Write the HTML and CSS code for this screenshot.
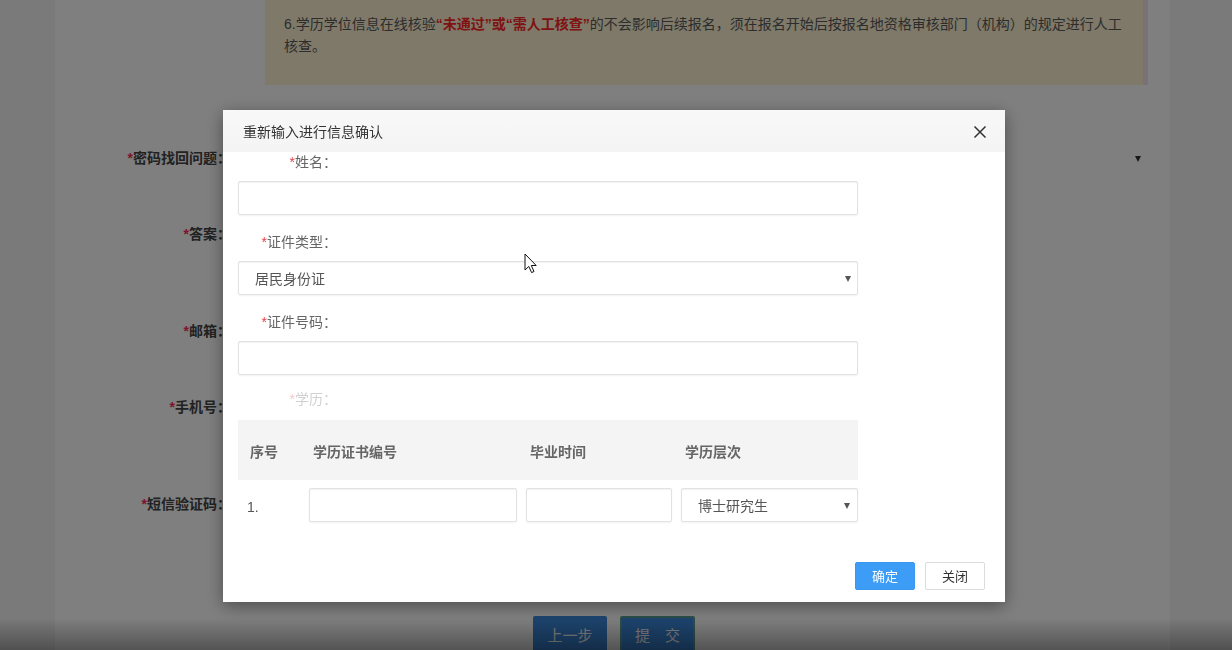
FILE: index.html
```html
<!DOCTYPE html>
<html lang="zh-CN">
<head>
<meta charset="utf-8">
<title>重新输入进行信息确认</title>
<link rel="stylesheet" href="styles.css">
</head>
<body>
<div class="page">
  <div class="notice">6.学历学位信息在线核验<b class="hl">“未通过”或“需人工核查”</b>的不会影响后续报名，须在报名开始后按报名地资格审核部门（机构）的规定进行人工<br>核查。</div>
  <div class="bg-form">
    <div class="bg-row short"><label class="bg-label"><i>*</i>密码找回问题：</label><div class="bg-field"><span class="caret dark"></span></div></div>
    <div class="bg-row tall"><label class="bg-label"><i>*</i>答案：</label></div>
    <div class="bg-row short"><label class="bg-label"><i>*</i>邮箱：</label></div>
    <div class="bg-row tall"><label class="bg-label"><i>*</i>手机号：</label></div>
    <div class="bg-row last"><label class="bg-label"><i>*</i>短信验证码：</label></div>
  </div>
  <div class="actions">
    <button class="btn-blue">上一步</button>
    <button class="btn-blue submit">提　交</button>
  </div>
</div>

<div class="mask"></div>

<div class="modal">
  <div class="modal-head">
    <span class="modal-title">重新输入进行信息确认</span>
    <span class="close"><svg width="14" height="14" viewBox="0 0 14 14"><path d="M1.5 1.5 L12.5 12.5 M12.5 1.5 L1.5 12.5" stroke="#333" stroke-width="1.5" fill="none"/></svg></span>
  </div>
  <div class="modal-body">
    <div class="group">
      <label class="lbl"><i>*</i>姓名：</label>
      <input class="input" type="text">
    </div>
    <div class="group">
      <label class="lbl"><i>*</i>证件类型：</label>
      <div class="input select"><span>居民身份证</span><span class="caret"></span></div>
    </div>
    <div class="group">
      <label class="lbl"><i>*</i>证件号码：</label>
      <input class="input" type="text">
    </div>
    <label class="lbl faint"><i>*</i>学历：</label>
    <div class="edu-table">
      <div class="th">序号</div>
      <div class="th">学历证书编号</div>
      <div class="th">毕业时间</div>
      <div class="th">学历层次</div>
      <div class="td idx">1.</div>
      <div class="td"><input class="input" type="text"></div>
      <div class="td"><input class="input" type="text"></div>
      <div class="td lastcol"><div class="input select"><span>博士研究生</span><span class="caret"></span></div></div>
    </div>
    <div class="modal-foot">
      <button class="btn btn-primary">确定</button>
      <button class="btn btn-default">关闭</button>
    </div>
  </div>
</div>

<div class="cursor"><svg width="14" height="22" viewBox="0 0 14 22"><path d="M1 1 L1 17 L4.8 13.4 L7.6 19.6 L10 18.5 L7.3 12.5 L12.2 12.5 Z" fill="#fff" stroke="#111" stroke-width="1" stroke-linejoin="round"/></svg></div>
</body>
</html>
```

FILE: styles.css
```css
* { box-sizing: border-box; }

html, body {
  margin: 0;
  height: 650px;
  overflow: hidden;
}

body {
  background: #f4f4f4;
  font-family: "Liberation Sans", "Noto Sans CJK SC", sans-serif;
  font-size: 14px;
  color: #333;
}

/* ---------- page behind the mask ---------- */
.page {
  margin-left: 55px;
  width: 1115px;
  height: 650px;
  overflow: hidden;
  background: #fff;
}

.notice {
  margin-left: 210px;
  width: 883px;
  height: 85px;
  padding: 13px 0 0 19px;
  background: #fdf3d2;
  border-right: 5px solid #f4e2ee;
  line-height: 22px;
  color: #5a5a5a;
  white-space: nowrap;
}

.notice .hl {
  color: #ff2424;
  font-weight: bold;
}

.bg-form {
  margin-top: 63px;
}

.bg-row {
  display: flex;
  align-items: flex-start;
}
.bg-row.short { height: 76px; }
.bg-row.tall { height: 97px; }
.bg-row.last { height: 122px; }

.bg-label {
  width: 176px;
  text-align: right;
  line-height: 20px;
  font-weight: bold;
  color: #444;
}
.bg-label i {
  font-style: normal;
  color: #ff2a55;
}

.bg-field {
  width: 910px;
  height: 20px;
  display: flex;
  justify-content: flex-end;
  align-items: center;
}

.actions {
  display: flex;
  justify-content: center;
  gap: 13px;
  padding-left: 3px;
}

.btn-blue {
  width: 74px;
  height: 40px;
  border: 0;
  border-radius: 2px;
  background: #3b88dc;
  color: #fff;
  font-family: inherit;
  font-size: 15px;
  padding: 0 0 4px;
}
.btn-blue.submit {
  width: 75px;
  border: 2px solid #55a090;
}

/* ---------- mask ---------- */
.mask {
  position: fixed;
  inset: 0;
  background: linear-gradient(to bottom, rgba(0,0,0,.5) 0, rgba(0,0,0,.5) 618px, rgba(0,0,0,.67) 650px);
}

/* ---------- modal ---------- */
.modal {
  position: fixed;
  left: 223px;
  top: 110px;
  width: 782px;
  background: #fff;
  box-shadow: 0 4px 16px rgba(0,0,0,.4);
  font-family: "Noto Sans CJK SC", sans-serif;
}

.modal-head {
  height: 42px;
  padding: 0 18px 0 20px;
  display: flex;
  align-items: center;
  justify-content: space-between;
  background: linear-gradient(#f8f8f9, #f4f4f5);
}

.modal-title {
  font-size: 14px;
  color: #333;
  line-height: 20px;
}

.close {
  display: flex;
  width: 14px;
  height: 14px;
  margin-top: 1px;
}

.modal-body {
  padding: 0 15px 12px;
}

.group {
  width: 620px;
  margin-bottom: 17px;
}

.lbl {
  display: block;
  width: 99px;
  height: 20px;
  margin-bottom: 9px;
  text-align: right;
  line-height: 20px;
  font-size: 14px;
  color: #666;
  font-family: "Liberation Sans", "Noto Sans CJK SC", sans-serif;
}
.lbl i {
  font-style: normal;
  color: #e2434a;
}

.lbl.faint {
  margin-top: -3px;
  margin-bottom: 11px;
  opacity: .3;
}

.input {
  display: block;
  width: 100%;
  height: 34px;
  margin: 0;
  padding: 0 16px;
  border: 1px solid #e2e2e4;
  border-radius: 2px;
  background: #fff;
  box-shadow: inset 0 1px 1px rgba(0,0,0,.05), 0 1px 2px rgba(0,0,0,.05);
  font-family: "Noto Sans CJK SC", sans-serif;
  font-size: 14px;
  color: #555;
}

.select {
  display: flex;
  align-items: center;
  justify-content: space-between;
  padding: 0 6px 0 16px;
  line-height: 20px;
}

.caret {
  width: 0;
  height: 0;
  border-left: 3.5px solid transparent;
  border-right: 3.5px solid transparent;
  border-top: 6px solid #555;
  margin-top: 1px;
}
.caret.dark {
  border-top-color: #333;
}

/* ---------- education table ---------- */
.edu-table {
  width: 620px;
  display: grid;
  grid-template-columns: 67px 217px 155px 181px;
  grid-template-rows: 60px 50px;
}

.th {
  background: #f4f4f5;
  padding: 2px 0 0 8px;
  display: flex;
  align-items: center;
  font-size: 14px;
  font-weight: bold;
  color: #666;
}
.th:first-child { padding-left: 12px; }

.td {
  display: flex;
  align-items: center;
  padding: 0 5px 0 4px;
}
.td.idx {
  padding: 4px 0 0 9px;
  font-size: 14px;
  color: #555;
  font-family: "Liberation Sans", sans-serif;
}
.td.lastcol { padding-right: 0; }
.td .input { padding: 0 10px; }
.td .select { padding: 0 7px 0 16px; }

.modal-foot {
  margin-top: 32px;
  display: flex;
  justify-content: flex-end;
  gap: 10px;
  padding-right: 5px;
}

.btn {
  width: 60px;
  height: 28px;
  border-radius: 2px;
  font-family: "Noto Sans CJK SC", sans-serif;
  font-size: 13px;
  padding: 0;
  line-height: 26px;
}
.btn-primary {
  background: #3d9cf6;
  border: 1px solid #3a97f0;
  color: #fff;
}
.btn-default {
  background: #fff;
  border: 1px solid #dcdcdc;
  color: #333;
}

/* ---------- mouse pointer ---------- */
.cursor {
  position: fixed;
  left: 524px;
  top: 253px;
  width: 14px;
  height: 22px;
}
```
